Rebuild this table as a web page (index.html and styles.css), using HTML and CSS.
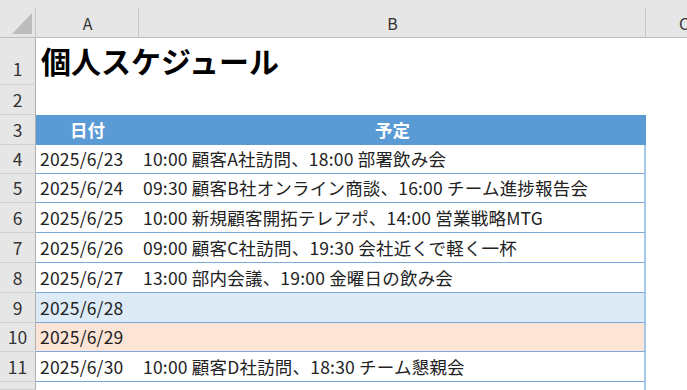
FILE: index.html
```html
<!DOCTYPE html>
<html lang="ja">
<head>
<meta charset="utf-8">
<title>個人スケジュール</title>
<link rel="stylesheet" href="styles.css">
</head>
<body>
<div class="sheet">
  <div class="corner"><svg class="tri" width="36" height="38" viewBox="0 0 36 38"><polygon points="12,34 32,34 32,13" fill="#bcbcbc"/></svg></div>
  <div class="colhead">A</div>
  <div class="colhead">B</div>
  <div class="colhead">C</div>

  <div class="rowhead bottom">1</div>
  <div class="titlecell"><span class="title">個人スケジュール</span></div>

  <div class="rowhead">2</div>
  <div class="blank wide"></div>

  <div class="rowhead">3</div>
  <div class="th">日付</div>
  <div class="th">予定</div>
  <div class="blank"></div>

  <div class="rowhead">4</div>
  <div class="td">2025/6/23</div>
  <div class="td last">10:00 顧客A社訪問、18:00 部署飲み会</div>
  <div class="blank"></div>

  <div class="rowhead">5</div>
  <div class="td">2025/6/24</div>
  <div class="td last">09:30 顧客B社オンライン商談、16:00 チーム進捗報告会</div>
  <div class="blank"></div>

  <div class="rowhead">6</div>
  <div class="td">2025/6/25</div>
  <div class="td last">10:00 新規顧客開拓テレアポ、14:00 営業戦略MTG</div>
  <div class="blank"></div>

  <div class="rowhead">7</div>
  <div class="td">2025/6/26</div>
  <div class="td last">09:00 顧客C社訪問、19:30 会社近くで軽く一杯</div>
  <div class="blank"></div>

  <div class="rowhead">8</div>
  <div class="td">2025/6/27</div>
  <div class="td last">13:00 部内会議、19:00 金曜日の飲み会</div>
  <div class="blank"></div>

  <div class="rowhead">9</div>
  <div class="td sat">2025/6/28</div>
  <div class="td last sat"></div>
  <div class="blank"></div>

  <div class="rowhead">10</div>
  <div class="td sun">2025/6/29</div>
  <div class="td last sun"></div>
  <div class="blank"></div>

  <div class="rowhead">11</div>
  <div class="td">2025/6/30</div>
  <div class="td last">10:00 顧客D社訪問、18:30 チーム懇親会</div>
  <div class="blank"></div>

  <div class="rowhead"></div>
  <div class="td end"></div>
  <div class="td last end"></div>
  <div class="blank"></div>
</div>
</body>
</html>
```

FILE: styles.css
```css
* { box-sizing: border-box; }
html, body { margin: 0; padding: 0; background: #fff; }
body {
  font-family: "Noto Sans CJK JP", "Noto Sans", sans-serif;
  color: #222;
  font-size: 17.5px;
}
.sheet {
  display: grid;
  grid-template-columns: 36px 103px 507px 76px;
  grid-template-rows: 38px 47px 30px 30px 29px 29px 30px 30px 30px 30px 29px 30px 8px;
  width: 687px;
  height: 390px;
  overflow: hidden;
}
.corner {
  background: linear-gradient(#c8c8c8, #c8c8c8) right bottom / 1px 29px no-repeat, #e6e6e6;
  border-bottom: 1px solid #bdbdbd;
  display: flex;
}
.tri { display: block; }
.colhead {
  background: linear-gradient(#c8c8c8, #c8c8c8) right bottom / 1px 29px no-repeat, #e6e6e6;
  border-bottom: 1px solid #bdbdbd;
  display: flex;
  align-items: center;
  justify-content: center;
  padding-top: 8px;
  font-size: 16px;
  line-height: 1;
  color: #333;
}
.rowhead {
  background: #e6e6e6;
  border-right: 1px solid #b0b0b0;
  border-bottom: 1px solid #d0d0d0;
  display: flex;
  align-items: center;
  justify-content: center;
  line-height: 1;
  color: #333;
}
.rowhead.bottom {
  align-items: flex-end;
  padding-bottom: 7px;
}
.titlecell {
  grid-column: 2 / 5;
  display: flex;
  align-items: flex-end;
  padding: 0 0 10px 5px;
}
.title {
  font-size: 30px;
  font-weight: 700;
  line-height: 1;
  color: #000;
}
.blank { background: #fff; }
.blank.wide { grid-column: 2 / 5; }
.th {
  background: #5b9bd5;
  color: #fff;
  font-weight: 700;
  display: flex;
  align-items: center;
  justify-content: center;
  line-height: 1;
}
.td {
  background: #fff;
  border-bottom: 1px solid #7aa9dc;
  display: flex;
  align-items: center;
  padding-left: 4px;
  line-height: 1;
  letter-spacing: 0.2px;
  white-space: nowrap;
}
.td.last { border-right: 2px solid #a6c8ea; }
.td.sat { background-color: #ddebf7; }
.td.sun { background-color: #fce4d6; }
.td.end { border-bottom: 0; }
```
